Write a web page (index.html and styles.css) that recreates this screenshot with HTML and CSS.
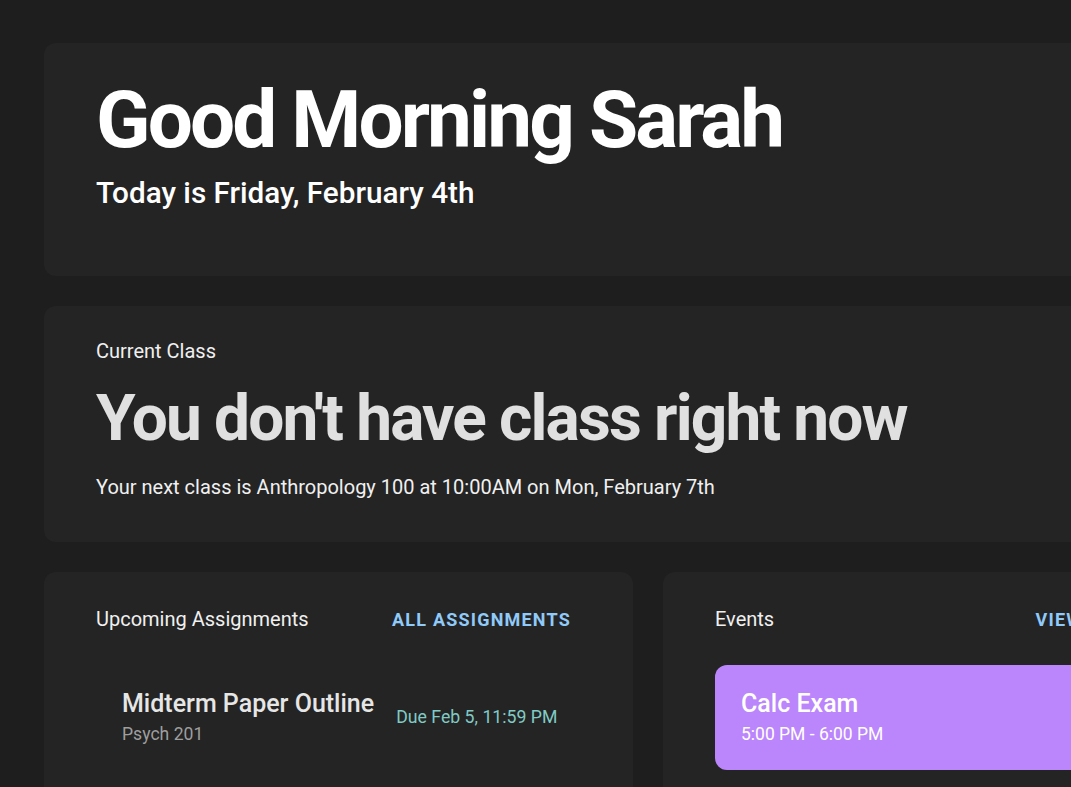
FILE: index.html
```html
<!DOCTYPE html>
<html lang="en">
<head>
<meta charset="utf-8">
<title>Dashboard</title>
<link rel="stylesheet" href="styles.css">
</head>
<body>
<main class="page">
  <section class="card greeting">
    <h1 class="hello">Good Morning Sarah</h1>
    <p class="today">Today is Friday, February 4th</p>
  </section>
  <section class="card current">
    <p class="label">Current Class</p>
    <h2 class="status">You don't have class right now</h2>
    <p class="next">Your next class is Anthropology 100 at 10:00AM on Mon, February 7th</p>
  </section>
  <div class="columns">
    <section class="card panel">
      <header class="panel-head">
        <span class="label">Upcoming Assignments</span>
        <a class="link">All Assignments</a>
      </header>
      <div class="assignment">
        <div class="a-main">
          <div class="a-title">Midterm Paper Outline</div>
          <div class="a-course">Psych 201</div>
        </div>
        <div class="a-due">Due Feb 5, 11:59 PM</div>
      </div>
    </section>
    <section class="card panel">
      <header class="panel-head">
        <span class="label">Events</span>
        <a class="link">View Calendar</a>
      </header>
      <div class="event">
        <div class="e-title">Calc Exam</div>
        <div class="e-time">5:00 PM - 6:00 PM</div>
      </div>
    </section>
  </div>
</main>
</body>
</html>
```
FILE: styles.css
```css
html, body {
  margin: 0;
  padding: 0;
  background: #1e1e1e;
  overflow: hidden;
}
body {
  font-family: Roboto, "Liberation Sans", sans-serif;
  color: #ffffff;
}
.page {
  width: 1208px;
  padding: 43px 0 0 44px;
  display: flex;
  flex-direction: column;
  gap: 30px;
}
.card {
  background: #242424;
  border-radius: 12px;
}
.greeting {
  height: 233px;
  box-sizing: border-box;
  padding: 30px 52px 0;
}
.hello {
  margin: 0;
  font-size: 80px;
  font-weight: 700;
  letter-spacing: -2.9px;
  line-height: 94px;
  color: #ffffff;
}
.today {
  margin: 9px 0 0;
  font-size: 29.7px;
  font-weight: 500;
  line-height: 34px;
}
.current {
  height: 236px;
  box-sizing: border-box;
  padding: 34px 52px 0;
}
.label {
  margin: 0;
  font-size: 20px;
  line-height: 23px;
  color: #f0f0f0;
}
.status {
  margin: 18px 0 0;
  font-size: 64px;
  font-weight: 700;
  letter-spacing: -1.85px;
  line-height: 75px;
  color: #e0e0e0;
}
.next {
  margin: 20px 0 0;
  font-size: 20px;
  line-height: 23px;
  color: #f0f0f0;
}
.columns {
  display: grid;
  grid-template-columns: 589px 589px;
  gap: 30px;
}
.panel {
  height: 260px;
  box-sizing: border-box;
  padding: 36px 62px 0 52px;
}
.panel-head {
  display: flex;
  justify-content: space-between;
  align-items: baseline;
}
.link {
  font-size: 18px;
  font-weight: 700;
  letter-spacing: 1.2px;
  text-transform: uppercase;
  color: #90caf9;
}
.assignment {
  display: flex;
  align-items: center;
  gap: 22px;
  margin-top: 58px;
  padding-left: 26px;
}
.a-title {
  font-size: 25px;
  font-weight: 500;
  line-height: 29px;
  color: #e6e6e6;
}
.a-course {
  margin-top: 5px;
  font-size: 17.6px;
  line-height: 22px;
  color: #9e9e9e;
}
.a-due {
  font-size: 17.7px;
  color: #80cbc4;
}
.event {
  margin-top: 34px;
  height: 105px;
  box-sizing: border-box;
  background: #bb86fc;
  border-radius: 12px;
  padding: 24px 26px 0;
}
.e-title {
  font-size: 25px;
  font-weight: 500;
  line-height: 29px;
}
.e-time {
  margin-top: 5px;
  font-size: 17.5px;
  line-height: 22px;
}
```
